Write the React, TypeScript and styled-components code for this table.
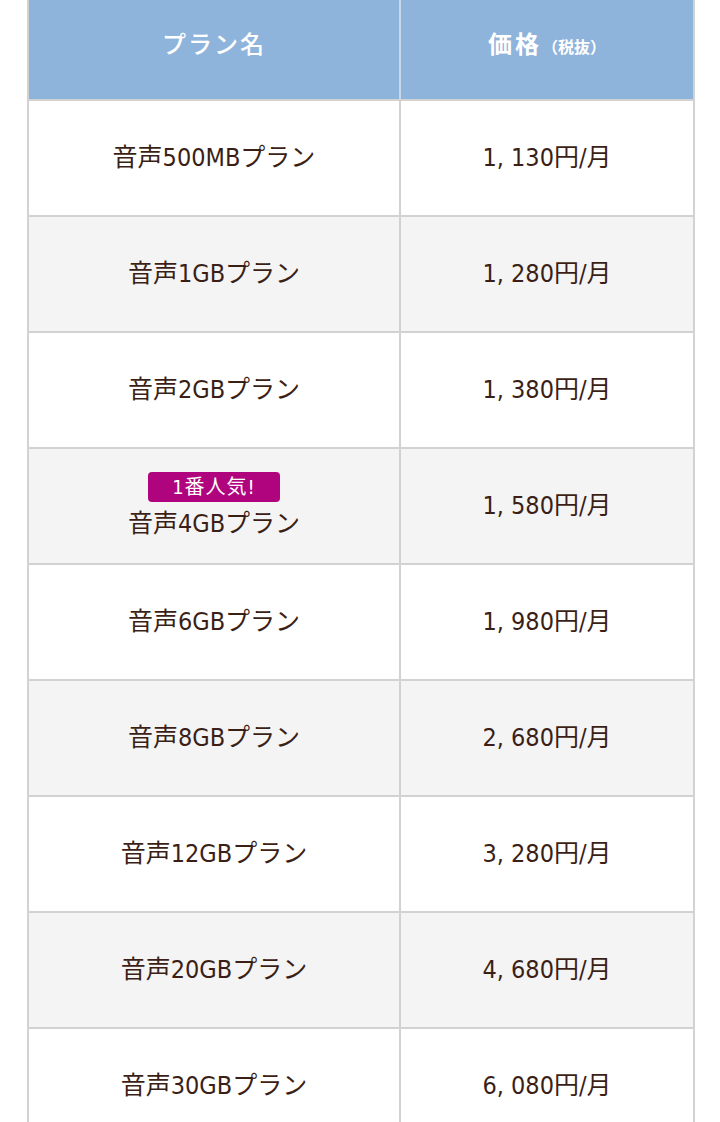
import React from "react";
import styled, { createGlobalStyle } from "styled-components";

const GlobalStyle = createGlobalStyle`
  html, body { margin: 0; padding: 0; background: #ffffff; }
  body { font-family: "Liberation Sans Narrow", "DejaVu Sans Condensed", "Noto Sans CJK JP", sans-serif; }
`;

const Page = styled.div`
  padding: 0 27px;
  background: #ffffff;
`;

const Table = styled.table`
  width: 666px;
  border-collapse: collapse;
  table-layout: fixed;
`;

const HeadCell = styled.th<{ $w: number }>`
  width: ${(p) => p.$w}px;
  height: 100px;
  box-sizing: border-box;
  padding: 0 0 14px;
  background: #8fb4dc;
  color: #ffffff;
  font-family: "Noto Sans CJK JP", sans-serif;
  font-weight: 500;
  font-size: 24px;
  letter-spacing: 2px;
  text-align: center;
  vertical-align: middle;
  border-left: 2px solid #c9d9ec;
  border-bottom: 2px solid #d2d2d2;
  &:first-child { border-left: 2px solid #d2d2d2; }
  &:last-child { border-right: 2px solid #d2d2d2; }
`;

const HeadStrong = styled.span`
  font-weight: 700;
  font-size: 24px;
  letter-spacing: 3px;
`;

const HeadSmall = styled.span`
  font-weight: 700;
  font-size: 16px;
  letter-spacing: 0;
`;

const Row = styled.tr<{ $alt: boolean }>`
  background: ${(p) => (p.$alt ? "#f4f4f4" : "#ffffff")};
`;

const Cell = styled.td`
  height: 116px;
  box-sizing: border-box;
  padding: 0;
  text-align: center;
  vertical-align: middle;
  border: 2px solid #d2d2d2;
  color: #3b1f16;
  font-family: "Liberation Sans Narrow", "DejaVu Sans Condensed", "Noto Sans CJK JP", sans-serif;
  font-stretch: condensed;
  font-size: 25px;
  line-height: 32px;
`;

const CellInner = styled.div`
  display: flex;
  flex-direction: column;
  align-items: center;
  gap: 6px;
`;

const Badge = styled.span`
  display: inline-flex;
  align-items: center;
  justify-content: center;
  width: 132px;
  height: 30px;
  border-radius: 4px;
  background: #b0047e;
  color: #ffffff;
  font-size: 20px;
  line-height: 30px;
  letter-spacing: 1px;
`;

type Plan = { name: string; price: string; badge?: string };

const plans: Plan[] = [
  { name: "音声500MBプラン", price: "1,130円/月" },
  { name: "音声1GBプラン", price: "1,280円/月" },
  { name: "音声2GBプラン", price: "1,380円/月" },
  { name: "音声4GBプラン", price: "1,580円/月", badge: "1番人気!" },
  { name: "音声6GBプラン", price: "1,980円/月" },
  { name: "音声8GBプラン", price: "2,680円/月" },
  { name: "音声12GBプラン", price: "3,280円/月" },
  { name: "音声20GBプラン", price: "4,680円/月" },
  { name: "音声30GBプラン", price: "6,080円/月" },
];

export default function App() {
  return (
    <>
      <GlobalStyle />
      <Page>
        <Table>
          <thead>
            <tr>
              <HeadCell $w={372}>プラン名</HeadCell>
              <HeadCell $w={294}>
                <HeadStrong>価格</HeadStrong>
                <HeadSmall>（税抜）</HeadSmall>
              </HeadCell>
            </tr>
          </thead>
          <tbody>
            {plans.map((p, i) => (
              <Row key={p.name} $alt={i % 2 === 1}>
                <Cell>
                  <CellInner>
                    {p.badge && <Badge>{p.badge}</Badge>}
                    <span>{p.name}</span>
                  </CellInner>
                </Cell>
                <Cell>{p.price.replace(",", ", ")}</Cell>
              </Row>
            ))}
          </tbody>
        </Table>
      </Page>
    </>
  );
}
